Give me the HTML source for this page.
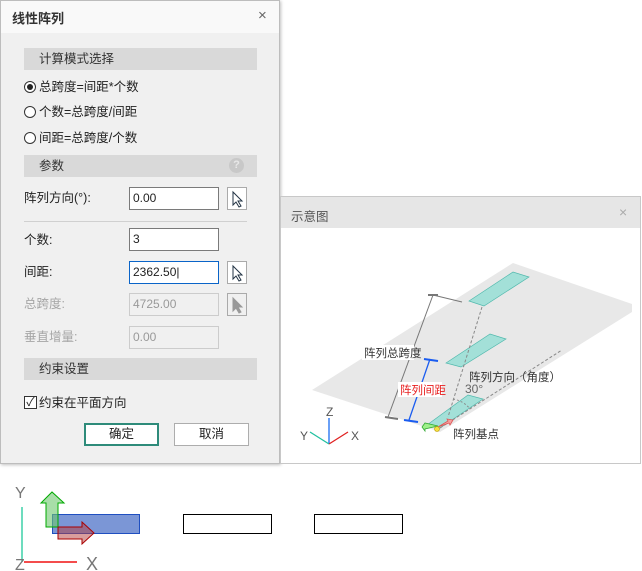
<!DOCTYPE html>
<html><head><meta charset="utf-8"><style>
*{box-sizing:border-box;margin:0;padding:0}
body{width:642px;height:571px;background:#fff;position:relative;overflow:hidden;font-family:"Liberation Sans","Microsoft YaHei","Noto Sans CJK SC",sans-serif;font-size:12px;color:#222}
.abs{position:absolute}
.dlg{left:0;top:0;width:280px;height:464px;background:#f0f0f0;border:1px solid #bdbdbd;box-shadow:1px 1px 3px rgba(0,0,0,.25)}
.tb{left:0;top:0;width:278px;height:32px;background:#f9f9f9}
.sec{left:23px;width:233px;height:22px;background:#d9d9d9;color:#333;padding-left:15px;line-height:22px;font-size:12.5px}
.lbl{left:23px;line-height:14px;font-size:12.5px}
.dis{color:#a6a6a6}
.inp{left:128px;width:90px;height:23px;background:#fff;border:1px solid #7a7a7a;padding-left:3px;line-height:20px;font-size:12px}
.inp.d{background:#f0f0f0;border-color:#ccc;color:#999}
.pk{left:226px;width:20px;height:23px;border:1px solid #aaa;background:#fff}
.rad{left:23px;width:12px;height:12px;border:1px solid #333;border-radius:50%;background:#fff}
.btn{top:422px;width:75px;height:23px;border:1px solid #adadad;background:#fff;text-align:center;line-height:21px;font-size:12.5px}
</style></head><body>
<div class="abs dlg">
<div class="abs tb"></div>
<div class="abs" style="left:11px;top:7px;font-weight:bold;font-size:13px;color:#333">线性阵列</div>
<div class="abs" style="left:257px;top:6px;font-size:15px;color:#666">×</div>
<div class="abs sec" style="top:47px">计算模式选择</div>
<div class="abs rad" style="top:80px"><div class="abs" style="left:2px;top:2px;width:6px;height:6px;border-radius:50%;background:#222"></div></div>
<div class="abs lbl" style="left:38px;top:79px">总跨度=间距*个数</div>
<div class="abs rad" style="top:105px"></div>
<div class="abs lbl" style="left:38px;top:104px">个数=总跨度/间距</div>
<div class="abs rad" style="top:131px"></div>
<div class="abs lbl" style="left:38px;top:130px">间距=总跨度/个数</div>
<div class="abs sec" style="top:154px">参数</div>
<div class="abs" style="left:228px;top:157px;width:15px;height:15px;border-radius:50%;background:#c8c8c8;color:#e8e8e8;font-size:11px;text-align:center;line-height:15px;font-weight:bold">?</div>
<div class="abs lbl" style="top:190px">阵列方向(°):</div>
<div class="abs inp" style="top:186px">0.00</div>
<div class="abs pk" style="top:186px"><svg width="18" height="21"><path d="M5 4 L5 17 L8 14 L11 19 L13 18 L10 13 L14 13 Z" fill="#fff" stroke="#234" stroke-width="1"/></svg></div>
<div class="abs" style="left:23px;top:220px;width:223px;height:1px;background:#d0d0d0"></div>
<div class="abs lbl" style="top:232px">个数:</div>
<div class="abs inp" style="top:227px">3</div>
<div class="abs lbl" style="top:264px">间距:</div>
<div class="abs inp" style="top:260px;border-color:#0a64c8">2362.50|</div>
<div class="abs pk" style="top:260px"><svg width="18" height="21"><path d="M5 4 L5 17 L8 14 L11 19 L13 18 L10 13 L14 13 Z" fill="#fff" stroke="#234" stroke-width="1"/></svg></div>
<div class="abs lbl dis" style="top:296px">总跨度:</div>
<div class="abs inp d" style="top:292px">4725.00</div>
<div class="abs pk" style="top:292px;background:#f0f0f0"><svg width="18" height="21"><path d="M5 4 L5 17 L8 14 L11 19 L13 18 L10 13 L14 13 Z" fill="#999" stroke="#999"/></svg></div>
<div class="abs lbl dis" style="top:329px">垂直增量:</div>
<div class="abs inp d" style="top:325px">0.00</div>
<div class="abs sec" style="top:357px">约束设置</div>
<div class="abs" style="left:23px;top:395px;width:13px;height:13px;border:1px solid #333;background:#fff;font-size:12px;line-height:11px;text-align:center">✓</div>
<div class="abs lbl" style="left:38px;top:395px">约束在平面方向</div>
<div class="abs btn" style="left:83px;border:2px solid #2e8b7a;line-height:19px">确定</div>
<div class="abs btn" style="left:173px">取消</div>
</div>

<div class="abs" style="left:280px;top:196px;width:361px;height:268px;border:1px solid #c8c8c8;background:#fff">
<div class="abs" style="left:0;top:0;width:359px;height:31px;background:#e6e6e6"></div>
<div class="abs" style="left:10px;top:9px;color:#555;font-size:12.5px">示意图</div>
<div class="abs" style="left:338px;top:7px;color:#aaa;font-size:14px">×</div>
</div>
<svg class="abs" style="left:280px;top:195px" width="362" height="270" font-family="Liberation Sans,Noto Sans CJK SC,sans-serif" font-size="11.5">
<polygon points="32,195 233,68 352,109 352,117 160,237" fill="#e8e8e8"/>
<polygon points="189,106 233,77 249,82 204,111" fill="#a3e0d8" stroke="#4fb8ac" stroke-width=".7"/>
<polygon points="166,168 210,139 226,144 181,172" fill="#a3e0d8" stroke="#4fb8ac" stroke-width=".7"/>
<polygon points="147,230 188,200 203,204 160,233" fill="#a3e0d8" stroke="#4fb8ac" stroke-width=".7"/>
<line x1="202" y1="112" x2="168" y2="222" stroke="#888" stroke-dasharray="3,2"/>
<line x1="160" y1="233" x2="282" y2="155" stroke="#888" stroke-dasharray="3,2"/>
<path d="M173 204 Q184 206 190 214" fill="none" stroke="#888" stroke-dasharray="2,2"/>
<line x1="153" y1="100" x2="108" y2="222" stroke="#777"/>
<line x1="153" y1="100" x2="182" y2="107" stroke="#777"/>
<line x1="148" y1="100" x2="158" y2="100" stroke="#777" stroke-width="2"/>
<line x1="105" y1="222" x2="118" y2="224" stroke="#777" stroke-width="2"/>
<line x1="150" y1="164" x2="129" y2="225" stroke="#1a5cf0" stroke-width="1.3"/>
<line x1="144" y1="164" x2="158" y2="166" stroke="#1a5cf0" stroke-width="2"/>
<line x1="124" y1="225" x2="138" y2="227" stroke="#1a5cf0" stroke-width="2"/>
<rect x="82" y="150" width="52" height="15" fill="#fff"/>
<text x="84" y="162" fill="#333">阵列总跨度</text>
<rect x="118" y="187" width="44" height="15" fill="#fff"/>
<text x="120" y="199" fill="#e82020">阵列间距</text>
<text x="189" y="186" fill="#333">阵列方向（角度）</text>
<text x="185" y="198" fill="#666" font-size="12">30°</text>
<text x="173" y="243" fill="#333">阵列基点</text>
<path d="M142 233 L155 230 L155 228 L158 232 L155 236 Z" fill="#9ef08a" stroke="#3a3" stroke-width=".8" transform="rotate(180 150 232)"/>
<path d="M158 232 L168 226 L167 224 L173 225 L170 230 L169 228 Z" fill="#f5a0a0" stroke="#d55" stroke-width=".8"/>
<circle cx="157" cy="234" r="2.5" fill="#f5e040" stroke="#b90" stroke-width=".6"/>
<line x1="49" y1="249" x2="49" y2="223" stroke="#1a6cf0" stroke-width="1.3"/>
<line x1="49" y1="249" x2="68" y2="237" stroke="#e02020" stroke-width="1.3"/>
<line x1="49" y1="249" x2="30" y2="237" stroke="#20c0a0" stroke-width="1.3"/>
<text x="46" y="221" fill="#555" font-size="12">Z</text>
<text x="71" y="245" fill="#555" font-size="12">X</text>
<text x="20" y="245" fill="#555" font-size="12">Y</text>
</svg>

<svg class="abs" style="left:0;top:470px" width="420" height="101" font-family="Liberation Sans,sans-serif">
<line x1="22" y1="37" x2="22" y2="92" stroke="#3cd0a8" stroke-width="1.5"/>
<line x1="24" y1="92" x2="77" y2="92" stroke="#f01010" stroke-width="1.5"/>
<text x="15" y="28" fill="#777" font-size="16">Y</text>
<text x="15" y="100" fill="#777" font-size="16">Z</text>
<text x="86" y="100" fill="#777" font-size="18">X</text>
<rect x="52.5" y="44.5" width="87" height="19" fill="#7b96d6" stroke="#1f4fc0"/>
<path d="M46 57 L46 33 L41 33 L52 22 L64 33 L58 33 L58 57 Z" fill="rgba(110,200,110,.6)" stroke="#0a0" stroke-width="1"/>
<path d="M58 57 L82 57 L82 52 L94 63 L82 74 L82 69 L58 69 Z" fill="rgba(180,60,60,.5)" stroke="#a00" stroke-width="1"/>
<rect x="183.5" y="44.5" width="88" height="19" fill="#fff" stroke="#000"/>
<rect x="314.5" y="44.5" width="88" height="19" fill="#fff" stroke="#000"/>
</svg>
</body></html>
